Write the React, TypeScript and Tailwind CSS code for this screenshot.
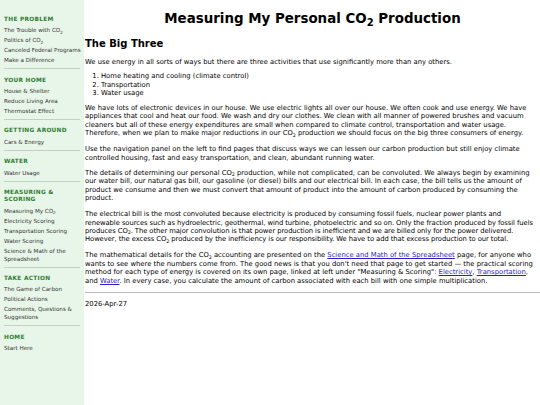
import React from "react";

const S = () => <sub className="text-[0.7em] align-baseline relative top-[0.3em]">2</sub>;

const nav: { title: React.ReactNode; links: React.ReactNode[] }[] = [
  {
    title: "THE PROBLEM",
    links: [
      <>The Trouble with CO<S /></>,
      <>Politics of CO<S /></>,
      "Canceled Federal Programs",
      "Make a Difference",
    ],
  },
  { title: "YOUR HOME", links: ["House & Shelter", "Reduce Living Area", "Thermostat Effect"] },
  { title: "GETTING AROUND", links: ["Cars & Energy"] },
  { title: "WATER", links: ["Water Usage"] },
  {
    title: <>MEASURING &amp;<br />SCORING</>,
    links: [
      <>Measuring My CO<S /></>,
      "Electricity Scoring",
      "Transportation Scoring",
      "Water Scoring",
      <>Science &amp; Math of the<br />Spreadsheet</>,
    ],
  },
  {
    title: "TAKE ACTION",
    links: ["The Game of Carbon", "Political Actions", <>Comments, Questions &amp;<br />Suggestions</>],
  },
  { title: "HOME", links: ["Start Here"] },
];

const Sub = () => <sub className="text-[0.7em] align-baseline relative top-[0.3em]">2</sub>;
const A = ({ children }: { children: React.ReactNode }) => (
  <a className="text-[#2a1fc4] underline">{children}</a>
);

export default function App() {
  return (
    <div
      className="flex w-[540px] h-[405px] overflow-hidden bg-white text-black"
      style={{ fontFamily: '"DejaVu Sans", Verdana, sans-serif' }}
    >
      <aside className="w-[84px] shrink-0 bg-[#e8f5e9] pl-[4px] pr-[4px] pt-[16px]">
        {nav.map((s, i) => (
          <div key={i} className={i > 0 ? "border-t border-[#c6cec6] mt-[3px] pt-[7.3px]" : ""}>
            <div className="text-[#2e7d32] font-bold text-[5.8px] leading-[7.4px] tracking-[0.05em] mb-[2px]">
              {s.title}
            </div>
            {s.links.map((l, j) => (
              <div key={j} className="text-[#333] text-[5.6px] leading-[8px] py-[1px] whitespace-nowrap">
                {l}
              </div>
            ))}
          </div>
        ))}
      </aside>
      <main className="flex-1 pl-[1px] pr-0 text-[6.8px] leading-[8.4px]">
        <h1 className="text-center font-bold text-[13.4px] leading-[18px] mt-[10px]">
          Measuring My Personal CO<sub className="text-[0.75em] align-baseline relative top-[0.25em]">2</sub> Production
        </h1>
        <h2 className="font-bold text-[10px] leading-[12px] mt-[10px]">The Big Three</h2>
        <p className="mt-[8px]">
          We use energy in all sorts of ways but there are three activities that use significantly more than any others.
        </p>
        <ol className="list-decimal pl-[16px] mt-[6px] leading-[8.5px]">
          <li>Home heating and cooling (climate control)</li>
          <li>Transportation</li>
          <li>Water usage</li>
        </ol>
        <p className="mt-[6px]">
          We have lots of electronic devices in our house. We use electric lights all over our house. We often cook and use
          energy. We have appliances that cool and heat our food. We wash and dry our clothes. We clean with all manner of
          powered brushes and vacuum cleaners but all of these energy expenditures are small when compared to climate
          control, transportation and water usage. Therefore, when we plan to make major reductions in our CO<Sub />{" "}
          production we should focus on the big three consumers of energy.
        </p>
        <p className="mt-[7.6px]">
          Use the navigation panel on the left to find pages that discuss ways we can lessen our carbon production but still
          enjoy climate controlled housing, fast and easy transportation, and clean, abundant running water.
        </p>
        <p className="mt-[7px]">
          The details of determining our personal CO<Sub /> production, while not complicated, can be convoluted. We always
          begin by examining our water bill, our natural gas bill, our gasoline (or diesel) bills and our electrical bill. In
          each case, the bill tells us the amount of product we consume and then we must convert that amount of product into
          the amount of carbon produced by consuming the product.
        </p>
        <p className="mt-[7.6px] tracking-[-0.07px]">
          The electrical bill is the most convoluted because electricity is produced by consuming fossil fuels, nuclear power
          plants and
          <br />
          renewable sources such as hydroelectric, geothermal, wind turbine, photoelectric and so on. Only the fraction
          produced by fossil fuels produces CO<Sub />. The other major convolution is that power production is inefficient
          and we are billed only for the power delivered.
          <br />
          However, the excess CO<Sub /> produced by the inefficiency is our responsibility. We have to add that excess
          production to our total.
        </p>
        <p className="mt-[7.6px]">
          The mathematical details for the CO<Sub /> accounting are presented on the{" "}
          <A>Science and Math of the Spreadsheet</A> page, for anyone who wants to see where the numbers come from. The good
          news is that you don't need that page to get started — the practical scoring method for each type of energy is
          covered on its own page, linked at left under "Measuring &amp; Scoring": <A>Electricity</A>,{" "}
          <A>Transportation</A>,
          <br />
          and <A>Water</A>. In every case, you calculate the amount of carbon associated with each bill with one simple
          multiplication.
        </p>
        <hr className="border-t border-[#bbb] mt-[7px]" />
        <p className="mt-[7px]">2026-Apr-27</p>
      </main>
    </div>
  );
}
